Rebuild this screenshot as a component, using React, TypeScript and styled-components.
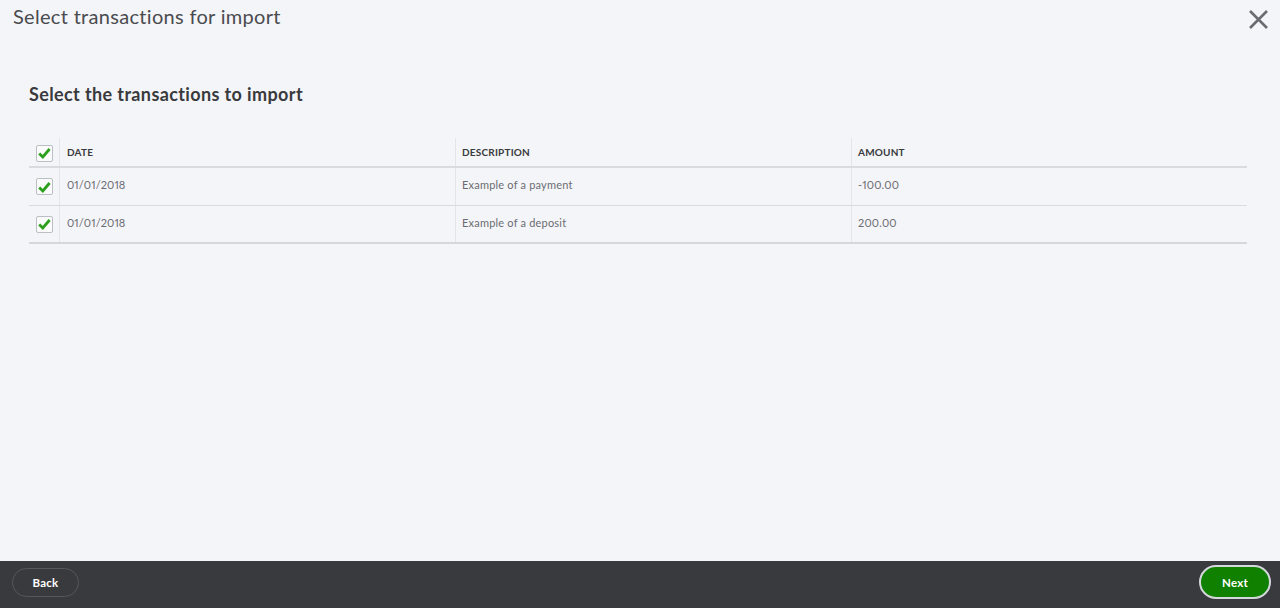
import React from "react";
import styled, { createGlobalStyle } from "styled-components";

const Global = createGlobalStyle`
  html, body { margin: 0; padding: 0; height: 100%; background: #f4f5f8; }
  #root { height: 100%; }
  * { box-sizing: border-box; }
`;

const Page = styled.div`
  width: 1280px;
  height: 608px;
  display: flex;
  flex-direction: column;
  background: #f4f5f8;
  font-family: "Lato", "Liberation Sans", sans-serif;
  color: #393a3d;
  overflow: hidden;
`;

const TopBar = styled.header`
  height: 34px;
  padding: 0 12px 0 13px;
  display: flex;
  justify-content: space-between;
  align-items: flex-start;
`;

const Title = styled.h1`
  margin: 0;
  font-size: 20px;
  line-height: 33px;
  font-weight: 400;
  color: #4a4b4f;
  letter-spacing: 0.31px;
`;

const CloseButton = styled.button`
  margin-top: 10px;
  width: 19px;
  height: 19px;
  padding: 0;
  border: 0;
  background: none;
  display: block;
`;

const Main = styled.main`
  flex: 1;
  padding: 0 33px 0 29px;
`;

const Heading = styled.h2`
  margin: 48px 0 32px;
  height: 24px;
  font-size: 18px;
  line-height: 24px;
  font-weight: 700;
  color: #393a3d;
  letter-spacing: 0.38px;
`;

const Table = styled.div`
  border-bottom: 2px solid #d4d7dc;
`;

const Row = styled.div<{ $header?: boolean; $last?: boolean }>`
  display: grid;
  grid-template-columns: 30px 396px 396px 1fr;
  height: ${(p) => (p.$header ? "30px" : p.$last ? "36px" : "38px")};
  border-bottom: ${(p) => (p.$last ? "0" : p.$header ? "2px solid #d9dbe0" : "1px solid #d9dbe0")};
`;

const CheckCell = styled.div<{ $header?: boolean }>`
  display: flex;
  align-items: center;
  padding-left: 7px;
  padding-top: ${(p) => (p.$header ? "2px" : "0")};
`;

const Cell = styled.div<{ $header?: boolean }>`
  display: flex;
  align-items: center;
  padding-left: 6px;
  padding-bottom: ${(p) => (p.$header ? "0" : "4px")};
  border-left: 1px solid #e3e5e9;
  font-size: ${(p) => (p.$header ? "10px" : "11px")};
  font-weight: ${(p) => (p.$header ? 700 : 400)};
  color: ${(p) => (p.$header ? "#393a3d" : "#6b6c72")};
  letter-spacing: 0.2px;
  font-variant-numeric: proportional-nums;

  &:nth-child(2) {
    padding-left: 7px;
    letter-spacing: ${(p) => (p.$header ? "0.2px" : "0.1px")};
  }
`;

const CheckBox = styled.span`
  width: 17px;
  height: 17px;
  border: 1px solid #babec5;
  border-radius: 2px;
  background: #fbfbfc;
  display: flex;
  align-items: center;
  justify-content: center;
`;

const Footer = styled.footer`
  height: 47px;
  background: #393a3d;
  padding: 0 9px 5px 12px;
  display: flex;
  align-items: center;
  justify-content: space-between;
`;

const BackButton = styled.button`
  width: 67px;
  height: 29px;
  padding: 0;
  border: 1px solid #56575b;
  border-radius: 15px;
  background: transparent;
  color: #fff;
  font: 700 11.5px "Lato", "Liberation Sans", sans-serif;
  letter-spacing: 0.2px;
`;

const NextButton = styled.button`
  width: 72px;
  height: 34px;
  padding: 0;
  border: 2px solid #d4d7dc;
  border-radius: 17px;
  background: #108000;
  color: #fff;
  font: 700 11.5px "Lato", "Liberation Sans", sans-serif;
  letter-spacing: 0.2px;
`;

const Check = () => (
  <CheckBox>
    <svg width="13" height="12" viewBox="0 0 13 12" fill="none">
      <path d="M1.2 6.6 L4.8 10 L11.6 2" stroke="#2ca01c" strokeWidth="2.8" />
    </svg>
  </CheckBox>
);

const rows = [
  { date: "01/01/2018", description: "Example of a payment", amount: "-100.00" },
  { date: "01/01/2018", description: "Example of a deposit", amount: "200.00" },
];

export default function App() {
  return (
    <Page>
      <Global />
      <TopBar>
        <Title>Select transactions for import</Title>
        <CloseButton aria-label="Close">
          <svg width="19" height="19" viewBox="0 0 19 19" fill="none">
            <path d="M1 1 L18 18 M18 1 L1 18" stroke="#6b6c72" strokeWidth="2.6" />
          </svg>
        </CloseButton>
      </TopBar>
      <Main>
        <Heading>Select the transactions to import</Heading>
        <Table>
          <Row $header>
            <CheckCell $header><Check /></CheckCell>
            <Cell $header>DATE</Cell>
            <Cell $header>DESCRIPTION</Cell>
            <Cell $header>AMOUNT</Cell>
          </Row>
          {rows.map((r, i) => (
            <Row key={i} $last={i === rows.length - 1}>
              <CheckCell><Check /></CheckCell>
              <Cell>{r.date}</Cell>
              <Cell>{r.description}</Cell>
              <Cell>{r.amount}</Cell>
            </Row>
          ))}
        </Table>
      </Main>
      <Footer>
        <BackButton>Back</BackButton>
        <NextButton>Next</NextButton>
      </Footer>
    </Page>
  );
}
